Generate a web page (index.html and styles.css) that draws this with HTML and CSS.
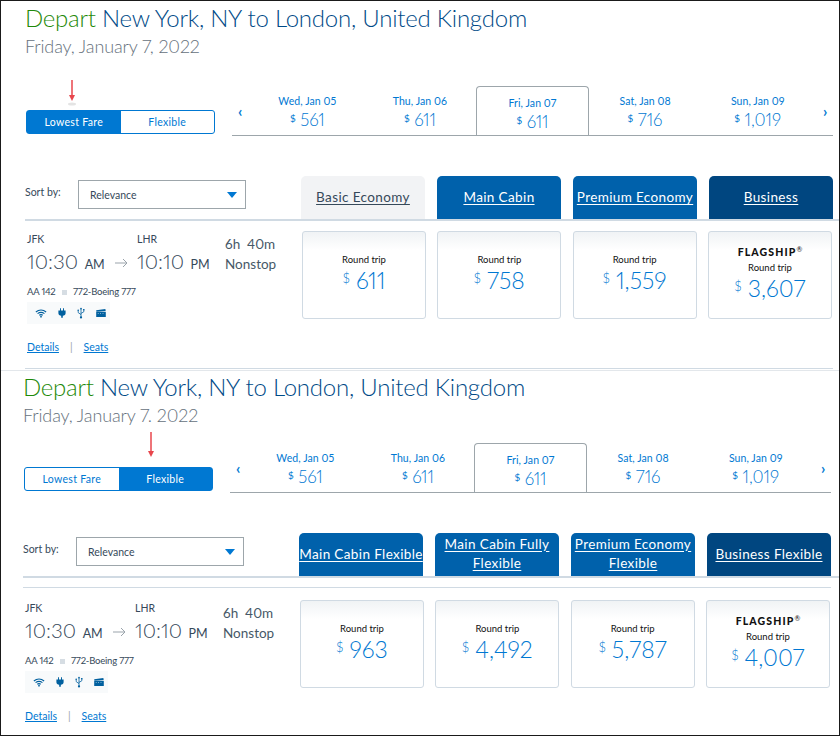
FILE: index.html
```html
<!DOCTYPE html>
<html lang="en">
<head>
<meta charset="utf-8">
<title>Flights</title>
<link rel="stylesheet" href="styles.css">
</head>
<body>
<svg class="defs" width="0" height="0" aria-hidden="true">
  <symbol id="i-wifi" viewBox="0 0 14 10">
    <path d="M1 3.200C4.500.4 9.500.4 13 3.200M3 5.200c2.400-1.900 5.600-1.900 8 0M5 7.100c1.200-.9 2.800-.9 4 0" fill="none" stroke="#00609f" stroke-width="1.300"/>
    <circle cx="7" cy="8.700" r="1" fill="#00609f"/>
  </symbol>
  <symbol id="i-plug" viewBox="0 0 10 12">
    <path d="M2.500 0h1.200v3h2.600V0h1.200v3H9.500v3.200C9.500 8 8 9.200 6 9.400V12H4V9.400C2 9.200.5 8 .5 6.200V3h2z" fill="#00609f"/>
  </symbol>
  <symbol id="i-usb" viewBox="0 0 10 14">
    <path d="M5 1v12M1.500 4v2.500L5 9M8.500 3.500v2L5 7.500" fill="none" stroke="#00609f" stroke-width="1"/>
    <path d="M5 0l1.500 2.200h-3z" fill="#00609f"/>
    <circle cx="5" cy="12.500" r="1.400" fill="#00609f"/>
    <circle cx="1.500" cy="3.500" r="1" fill="#00609f"/>
    <rect x="7.600" y="2" width="1.800" height="1.800" fill="#00609f"/>
  </symbol>
  <symbol id="i-film" viewBox="0 0 12 10">
    <path d="M0 3.500h12V10H0z" fill="#00609f"/>
    <path d="M0 1.500L11.500 0l.3 2.400L.3 3.300z" fill="#00609f"/>
    <path d="M2 5h1v1H2zM5 5h1v1H5zM8 5h1v1H8z" fill="#cfe0ee"/>
  </symbol>
</svg>
<div class="frame">

<section class="panel panel-first">
  <h1 class="title"><span class="title-green">Depart</span> New York, NY to London, United Kingdom</h1>
  <p class="date-line">Friday, January 7, 2022</p>
  <div class="controls">
    <div class="toggle">
      <span class="toggle-opt toggle-on">Lowest Fare</span>
      <span class="toggle-opt">Flexible</span>
      <svg class="red-arrow" width="8" height="26" viewBox="0 0 8 26"><path d="M4 0v17" stroke="#e8464c" stroke-width="1.500"/><path d="M1 15h6l-3 6z" fill="#e8464c"/><ellipse cx="4" cy="24" rx="4" ry="1.500" fill="#e4e4e4"/></svg>
    </div>
    <div class="strip">
      <span class="chev">&#8249;</span>
      <div class="day"><span class="day-name">Wed, Jan 05</span><span class="day-price"><small>$</small> 561</span></div>
      <div class="day"><span class="day-name">Thu, Jan 06</span><span class="day-price"><small>$</small> 611</span></div>
      <div class="day day-sel"><span class="day-name">Fri, Jan 07</span><span class="day-price"><small>$</small> 611</span></div>
      <div class="day"><span class="day-name">Sat, Jan 08</span><span class="day-price"><small>$</small> 716</span></div>
      <div class="day"><span class="day-name">Sun, Jan 09</span><span class="day-price"><small>$</small> 1,019</span></div>
      <span class="chev chev-next">&#8250;</span>
    </div>
  </div>
  <div class="sort-row">
    <label class="sort-label">Sort by:</label>
    <div class="select">Relevance<i class="caret"></i></div>
    <div class="tabs">
      <a class="tab tab-basic">Basic Economy</a>
      <a class="tab">Main Cabin</a>
      <a class="tab">Premium Economy</a>
      <a class="tab tab-dark">Business</a>
    </div>
  </div>
  <div class="result">
    <div class="flight">
      <div class="times">
        <div class="stop"><span class="code">JFK</span><span class="time">10:30 <small>AM</small></span></div>
        <svg class="arrow" width="13" height="10" viewBox="0 0 13 10"><path d="M0 5h12M8 1l4 4-4 4" fill="none" stroke="#9aa3ab" stroke-width="1"/></svg>
        <div class="stop"><span class="code">LHR</span><span class="time">10:10 <small>PM</small></span></div>
        <div class="dur">6h&nbsp; 40m<br>Nonstop</div>
      </div>
      <div class="meta">AA 142 <i class="sq"></i> 772-Boeing 777</div>
      <div class="amen">
        <svg width="12" height="9"><use href="#i-wifi"/></svg>
        <svg width="8" height="10"><use href="#i-plug"/></svg>
        <svg width="8" height="12"><use href="#i-usb"/></svg>
        <svg width="10" height="8"><use href="#i-film"/></svg>
      </div>
      <div class="links"><a>Details</a><span class="pipe">|</span><a>Seats</a></div>
    </div>
    <div class="cards">
      <div class="card"><span class="rt">Round trip</span><span class="price"><small>$</small> 611</span></div>
      <div class="card"><span class="rt">Round trip</span><span class="price"><small>$</small> 758</span></div>
      <div class="card"><span class="rt">Round trip</span><span class="price"><small>$</small> 1,559</span></div>
      <div class="card card-flag"><span class="flag">FLAGSHIP<sup>&reg;</sup></span><span class="rt">Round trip</span><span class="price"><small>$</small> 3,607</span></div>
    </div>
  </div>
</section>

<section class="panel panel-second">
  <h1 class="title"><span class="title-green">Depart</span> New York, NY to London, United Kingdom</h1>
  <p class="date-line">Friday, January 7. 2022</p>
  <div class="controls">
    <div class="toggle">
      <span class="toggle-opt">Lowest Fare</span>
      <span class="toggle-opt toggle-on">Flexible</span>
      <svg class="red-arrow red-arrow-flex" width="8" height="30" viewBox="0 0 8 30"><path d="M4 0v21" stroke="#e8464c" stroke-width="1.500"/><path d="M1 19h6l-3 6z" fill="#e8464c"/></svg>
    </div>
    <div class="strip">
      <span class="chev">&#8249;</span>
      <div class="day"><span class="day-name">Wed, Jan 05</span><span class="day-price"><small>$</small> 561</span></div>
      <div class="day"><span class="day-name">Thu, Jan 06</span><span class="day-price"><small>$</small> 611</span></div>
      <div class="day day-sel"><span class="day-name">Fri, Jan 07</span><span class="day-price"><small>$</small> 611</span></div>
      <div class="day"><span class="day-name">Sat, Jan 08</span><span class="day-price"><small>$</small> 716</span></div>
      <div class="day"><span class="day-name">Sun, Jan 09</span><span class="day-price"><small>$</small> 1,019</span></div>
      <span class="chev chev-next">&#8250;</span>
    </div>
  </div>
  <div class="sort-row">
    <label class="sort-label">Sort by:</label>
    <div class="select">Relevance<i class="caret"></i></div>
    <div class="tabs">
      <a class="tab"><span>Main Cabin Flexible</span></a>
      <a class="tab tab-two"><span>Main Cabin Fully Flexible</span></a>
      <a class="tab tab-two"><span>Premium Economy Flexible</span></a>
      <a class="tab tab-dark"><span>Business Flexible</span></a>
    </div>
  </div>
  <div class="result">
    <div class="flight">
      <div class="times">
        <div class="stop"><span class="code">JFK</span><span class="time">10:30 <small>AM</small></span></div>
        <svg class="arrow" width="13" height="10" viewBox="0 0 13 10"><path d="M0 5h12M8 1l4 4-4 4" fill="none" stroke="#9aa3ab" stroke-width="1"/></svg>
        <div class="stop"><span class="code">LHR</span><span class="time">10:10 <small>PM</small></span></div>
        <div class="dur">6h&nbsp; 40m<br>Nonstop</div>
      </div>
      <div class="meta">AA 142 <i class="sq"></i> 772-Boeing 777</div>
      <div class="amen">
        <svg width="12" height="9"><use href="#i-wifi"/></svg>
        <svg width="8" height="10"><use href="#i-plug"/></svg>
        <svg width="8" height="12"><use href="#i-usb"/></svg>
        <svg width="10" height="8"><use href="#i-film"/></svg>
      </div>
      <div class="links"><a>Details</a><span class="pipe">|</span><a>Seats</a></div>
    </div>
    <div class="cards">
      <div class="card"><span class="rt">Round trip</span><span class="price"><small>$</small> 963</span></div>
      <div class="card"><span class="rt">Round trip</span><span class="price"><small>$</small> 4,492</span></div>
      <div class="card"><span class="rt">Round trip</span><span class="price"><small>$</small> 5,787</span></div>
      <div class="card card-flag"><span class="flag">FLAGSHIP<sup>&reg;</sup></span><span class="rt">Round trip</span><span class="price"><small>$</small> 4,007</span></div>
    </div>
  </div>
</section>

</div>
</body>
</html>
```

FILE: styles.css
```css
* { box-sizing: border-box; }
html, body { margin: 0; padding: 0; }
body {
  background: #fff;
  font-family: Lato, "Open Sans", sans-serif;
  font-feature-settings: "pnum" 1;
  color: #36495a;
}
a { cursor: pointer; }
.defs { position: absolute; }

.frame {
  width: 840px;
  height: 736px;
  border: 1px solid #1a1a1a;
  overflow: hidden;
}

.panel-first { padding-left: 24px; height: 370px; border-bottom: 1px solid #e3e7eb; }
.panel-second { padding-left: 22px; }

.title {
  margin: 0;
  padding-top: 3px;
  font-size: 24px;
  line-height: 28px;
  font-weight: 300;
  color: #004a87;
  letter-spacing: -.23px;
  white-space: nowrap;
}
.panel-second .title { padding-top: 2px; }
.title-green { color: #1f8a0a; }
.date-line {
  margin: 2px 0 0;
  font-size: 18px;
  line-height: 24px;
  font-weight: 300;
  color: #66717c;
  letter-spacing: -.12px;
}

.controls { display: flex; margin-top: 28px; height: 50px; }
.panel-second .controls { margin-top: 16px; }
.toggle {
  position: relative;
  display: flex;
  width: 189px;
  height: 24px;
  margin: 24px 0 0 1px;
  border: 1px solid #0078d2;
  border-radius: 3px;
}
.toggle-opt {
  flex: 1 1 0;
  text-align: center;
  font-size: 10.500px;
  line-height: 22px;
  color: #0078d2;
  letter-spacing: .3px;
}
.toggle-opt.toggle-on { background: #0078d2; color: #fff; }
.red-arrow { position: absolute; left: 41px; top: -31px; }
.red-arrow-flex { left: 122px; top: -36px; }

.strip {
  display: grid;
  grid-template-columns: 19px repeat(5, 112.6px) 1fr;
  width: 601px;
  height: 50px;
  margin-left: 17px;
  border-bottom: 1px solid #9da6ab;
}
.chev { color: #0078d2; font-size: 15px; line-height: 1; padding: 18px 0 0 6px; font-weight: 700; }
.chev-next { padding-left: 9px; }
.day { display: flex; flex-direction: column; align-items: center; padding-top: 8px; color: #0078d2; }
.day-name { font-size: 10.500px; line-height: 14px; letter-spacing: .08px; }
.day-price { font-size: 17px; line-height: 20px; font-weight: 300; }
.day-price small { font-size: 10px; font-weight: 400; vertical-align: 4px; }
.day-sel {
  height: 49px;
  padding-top: 9px;
  border: 1px solid #9da6ab;
  border-bottom: none;
  border-radius: 4px 4px 0 0;
}

.sort-row {
  display: flex;
  align-items: flex-start;
  height: 45px;
  margin-top: 40px;
  border-bottom: 2px solid #d0dae3;
}
.sort-label { width: 53px; margin-top: 9px; font-size: 10.500px; line-height: 14px; color: #36495a; }
.select {
  position: relative;
  width: 168px;
  height: 29px;
  margin-top: 4px;
  padding-left: 11px;
  border: 1px solid #9da6ab;
  font-size: 10.500px;
  line-height: 28px;
  color: #36495a;
}
.caret {
  position: absolute;
  right: 8px;
  top: 11px;
  border-left: 5px solid transparent;
  border-right: 5px solid transparent;
  border-top: 6px solid #0078d2;
}
.tabs {
  display: grid;
  grid-template-columns: repeat(4, 124px);
  column-gap: 12px;
  margin-left: 55px;
  height: 43px;
}
.tab {
  display: flex;
  align-items: center;
  justify-content: center;
  text-align: center;
  padding: 0 1px;
  border-radius: 5px 5px 0 0;
  background: #0061ab;
  color: #fff;
  font-size: 13.500px;
  line-height: 19px;
  letter-spacing: .38px;
  text-decoration: underline;
  text-underline-offset: 2px;
  white-space: nowrap;
}
.tab-two { white-space: normal; padding-bottom: 2px; }
.tab-basic { background: #f2f3f5; color: #36495a; }
.tab-dark { background: #004680; }

.result { display: flex; align-items: flex-start; position: relative; }
.panel-first .result { height: 148px; width: 808px; border-bottom: 1px solid #d0dae3; }
.flight { width: 277px; padding: 11px 0 0 2px; }
.times { display: grid; grid-template-columns: 88px 22px 88px auto; align-items: start; }
.stop { display: flex; flex-direction: column; }
.code { font-size: 10.500px; line-height: 14px; color: #36495a; }
.time { font-size: 20.500px; line-height: 30px; font-weight: 300; color: #36495a; white-space: nowrap; }
.time small { font-size: 12.500px; font-weight: 400; margin-left: 1px; }
.arrow { margin-top: 26px; }
.dur { font-size: 13.500px; line-height: 20px; color: #465867; margin-top: 2px; white-space: nowrap; }
.meta { margin-top: 5px; font-size: 9.500px; line-height: 14px; color: #36495a; letter-spacing: -.2px; }
.sq { display: inline-block; width: 5px; height: 5px; margin: 0 4px; background: #d6dde3; }
.amen {
  display: flex;
  align-items: center;
  gap: 11px;
  width: 83px;
  height: 22px;
  margin-top: 3px;
  padding-left: 8px;
  background: #f8fafb;
}
.links { margin-top: 16px; font-size: 10.500px; line-height: 14px; }
.links a { color: #0078d2; text-decoration: underline; }
.pipe { margin: 0 11px; color: #9da6ab; }

.cards {
  display: grid;
  grid-template-columns: repeat(4, 124px);
  column-gap: 11.330px;
  margin-top: 10px;
}
.card {
  display: flex;
  flex-direction: column;
  align-items: center;
  height: 88px;
  padding-top: 21px;
  border: 1px solid #d0dae3;
  border-radius: 3px;
  background: linear-gradient(#f0f3f5, #fff 18px);
}
.card-flag { padding-top: 14px; }
.rt { font-size: 9.500px; line-height: 14px; color: #111; }
.flag { margin-bottom: 2px; font-size: 10.500px; line-height: 13px; font-weight: 900; letter-spacing: 1.100px; color: #111; }
.flag sup { font-size: 7px; line-height: 0; font-weight: 400; letter-spacing: 0; }
.price { font-size: 23px; line-height: 22px; font-weight: 300; color: #0078d2; }
.price small { font-size: 13px; vertical-align: 6px; }

.panel-second .result::before {
  content: "";
  position: absolute;
  left: 0;
  right: 8px;
  top: 9px;
  border-top: 1px solid #d0dae3;
}
.panel-second .flight { padding-top: 23px; }
.panel-second .cards { margin-top: 22px; }
```
